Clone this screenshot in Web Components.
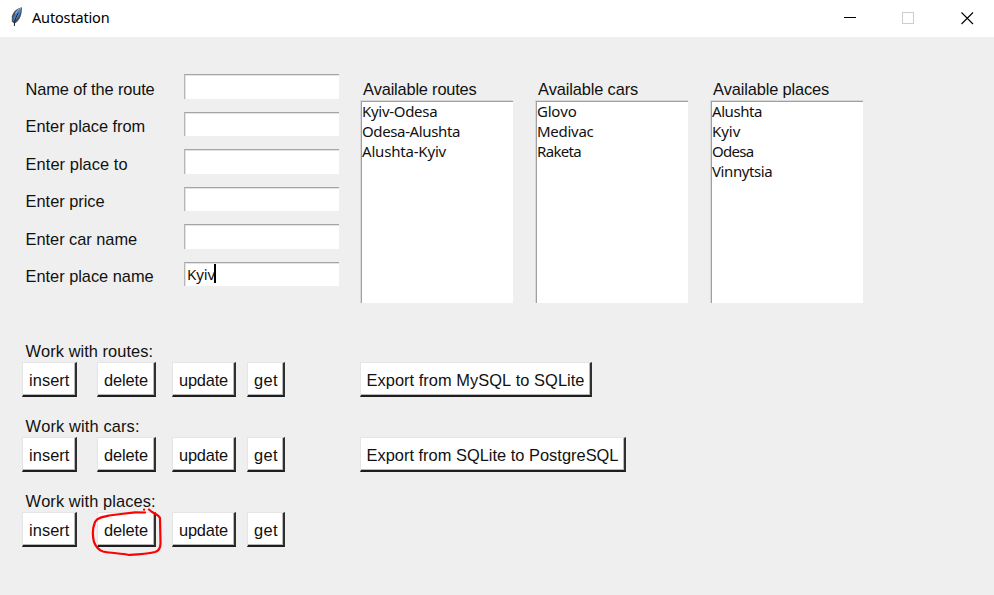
<!DOCTYPE html>
<html lang="en">
<head>
<meta charset="utf-8">
<title>Autostation</title>
<style>
html, body { margin: 0; height: 100%; overflow: hidden; }
</style>
</head>
<body>
<auto-window></auto-window>
<script>
const define = (name, html, setup) => {
  const template = document.createElement('template');
  template.innerHTML = html;
  customElements.define(name, class extends HTMLElement {
    connectedCallback() {
      if (this.shadowRoot) return;
      const root = this.attachShadow({ mode: 'open' });
      root.append(template.content.cloneNode(true));
      if (setup) setup.call(this, root);
    }
  });
};

// Single line of text whose tracking is adjusted to reach the width in "w".
define('fit-text', `
<style>
:host { display: block; white-space: nowrap; font-kerning: none; }
span { display: inline-block; }
</style><span></span>`, function (root) {
  const span = root.querySelector('span');
  const text = this.getAttribute('text');
  span.textContent = text;
  const target = Number(this.getAttribute('w'));
  const width = span.getBoundingClientRect().width;
  if (target && width) span.style.letterSpacing = ((target - width) / text.length) + 'px';
});

define('title-bar', `
<style>
:host { display: flex; height: 37px; background: #fff; align-items: center; font: 14.5px/20px "Noto Sans", "Open Sans", sans-serif; color: #000; }
.feather { width: 16px; height: 22px; margin-left: 9px; margin-right: 7px; margin-bottom: 3px; }
fit-text { flex: 1; margin-bottom: 3px; }
.controls { display: flex; height: 37px; }
.controls svg { width: 58.5px; height: 37px; }
</style>
<svg class="feather" viewBox="0 0 16 22">
  <path d="M13 1.2C8.5 2.1 4 5.4 2.9 10.2L2.8 15.2l1.9 2.1 2-.2C10 14.5 11.9 11 12.6 6.6z" fill="#4a515b"/>
  <path d="M12.1 2.2C8.8 4 5.9 7 4.6 11.4L4.4 15.5C8 13 10.7 9.5 11.6 5.8z" fill="#4c84ca"/>
  <path d="M11.8 2.1C9.5 3.3 7.6 5.2 6.5 7.5" fill="none" stroke="#a9c4e4" stroke-width="1"/>
  <path d="M9.4 7C7.4 10 6.2 12.7 5.5 16.5L5.4 20" fill="none" stroke="#17202d" stroke-width="1"/>
</svg>
<fit-text text="Autostation" w="77.5"></fit-text>
<div class="controls">
  <svg viewBox="0 0 58.5 37"><path d="M25 17.5h12" stroke="#000" shape-rendering="crispEdges"/></svg>
  <svg viewBox="0 0 58.5 37"><path d="M25 12.5h11v11h-11z" fill="none" stroke="#ccc" shape-rendering="crispEdges"/></svg>
  <svg viewBox="0 0 58.5 37"><path d="M25.5 12.5l11.5 11.5M37 12.5l-11.5 11.5" stroke="#000" stroke-width="1.1"/></svg>
</div>`);

define('form-row', `
<style>
:host { display: grid; grid-template-columns: 158px 155px; height: 37.5px; align-items: start; }
.label { padding-top: 4.7px; margin-left: -0.4px; }
.box { box-sizing: border-box; height: 24.5px; background: #fff; border-top: 1px solid #a5a5a5; border-left: 1px solid #b5b5b5; box-shadow: inset 1px 1px #e3e3e3; display: flex; align-items: center; padding: 0 0 1px 2px; font: 15px/20px "Noto Sans", "Open Sans", sans-serif; color: #111; }
.caret { width: 2px; height: 19px; background: #000; margin-left: -1px; }
</style>
<div class="label"></div><div class="box"></div>`, function (root) {
  root.querySelector('.label').innerHTML = `<fit-text text="${this.getAttribute('label')}" w="${this.getAttribute('w')}"></fit-text>`;
  const value = this.getAttribute('value');
  if (value) root.querySelector('.box').innerHTML = `<fit-text text="${value}" w="28"></fit-text><i class="caret"></i>`;
});

define('list-box', `
<style>
:host { display: block; width: 153px; }
.head { padding: 5px 0 0 3px; height: 21px; }
.list { box-sizing: border-box; height: 203px; background: #fff; border-top: 1px solid #d9d9d9; border-left: 1px solid #d9d9d9; box-shadow: inset 1px 1px #a0a0a0; padding: 0 0 0 1px; font: 15px/20px "Noto Sans", "Open Sans", sans-serif; color: #111; }
</style>
<div class="head"></div><div class="list"></div>`, function (root) {
  root.querySelector('.head').innerHTML = `<fit-text text="${this.getAttribute('heading')}" w="${this.getAttribute('w')}"></fit-text>`;
  root.querySelector('.list').innerHTML = this.getAttribute('items').split(',').map(item => {
    const [text, w] = item.split(':');
    return `<fit-text text="${text}" w="${w}"></fit-text>`;
  }).join('');
});

define('tk-button', `
<style>
:host { display: block; position: relative; }
button { all: unset; box-sizing: border-box; display: block; width: 100%; height: 35px; background: #fff; border: 1px solid #e5e5e5; border-right: 2px solid #303030; border-bottom: 2px solid #1e1e1e; box-shadow: inset -1px -1px #b8b8b8; padding: 2px 0 0 6px; line-height: 20px; }
</style>
<button></button><slot></slot>`, function (root) {
  this.style.width = this.getAttribute('size') + 'px';
  root.querySelector('button').innerHTML = `<fit-text text="${this.getAttribute('text')}" w="${this.getAttribute('w')}"></fit-text>`;
});

define('action-group', `
<style>
:host { display: block; height: 75px; }
.head { padding-left: 3.6px; height: 20.5px; box-sizing: border-box; line-height: 18px; }
.row { display: grid; grid-template-columns: 75px 75px 75px 112.5px auto; justify-content: start; }
</style>
<div class="head"></div>
<div class="row">
  <tk-button text="insert" w="40.5" size="55"></tk-button>
  <tk-button text="delete" w="44" size="59"><slot></slot></tk-button>
  <tk-button text="update" w="49" size="64"></tk-button>
  <tk-button text="get" w="24" size="38"></tk-button>
  <slot name="export"></slot>
</div>`, function (root) {
  root.querySelector('.head').innerHTML = `<fit-text text="${this.getAttribute('heading')}" w="${this.getAttribute('w')}"></fit-text>`;
});

define('pen-circle', `
<style>
:host { position: absolute; left: -7px; top: -5px; width: 74px; height: 52px; pointer-events: none; }
svg { display: block; overflow: visible; }
</style>
<svg width="74" height="52" viewBox="90 507 74 52" fill="none" stroke="#fe0000" stroke-width="2.2" stroke-linecap="round" stroke-linejoin="round">
  <path d="M145 512.5L135 512.3 121 514 109 515.5C102 517 97 518 95 522C92.5 528 92.5 536 94 542C96 547 98 550 103 551.5C112 553.5 121 553 129 555C137 554.5 146 554 155 552C159 551 160.5 548 160.5 543L160 518C159 515 155 513.5 152 512L149 509.5"/>
  <path d="M144 509.7h.1"/>
</svg>`);

define('auto-window', `
<style>
:host { display: flex; flex-direction: column; height: 595px; background: #efefef; font: 16.4px/20px "Liberation Sans", Arial, sans-serif; color: #111; }
main { display: flex; flex-direction: column; }
.top { display: flex; padding: 37px 0 0 26px; height: 267.5px; box-sizing: content-box; }
.form { width: 334px; }
.lists { display: flex; gap: 22px; }
.actions { padding-left: 22px; }
</style>
<title-bar></title-bar>
<main>
  <section class="top">
    <div class="form">
      <form-row label="Name of the route" w="129"></form-row>
      <form-row label="Enter place from" w="119.5"></form-row>
      <form-row label="Enter place to" w="102"></form-row>
      <form-row label="Enter price" w="79"></form-row>
      <form-row label="Enter car name" w="111.5"></form-row>
      <form-row label="Enter place name" w="128" value="Kyiv"></form-row>
    </div>
    <div class="lists">
      <list-box heading="Available routes" w="113.5" items="Kyiv-Odesa:75.3,Odesa-Alushta:98,Alushta-Kyiv:84"></list-box>
      <list-box heading="Available cars" w="100" items="Glovo:39.5,Medivac:56.5,Raketa:44"></list-box>
      <list-box heading="Available places" w="116" items="Alushta:50,Kyiv:28.3,Odesa:41.5,Vinnytsia:60.3"></list-box>
    </div>
  </section>
  <section class="actions">
    <action-group heading="Work with routes:" w="127.5"><tk-button slot="export" text="Export from MySQL to SQLite" w="218" size="232.5"></tk-button></action-group>
    <action-group heading="Work with cars:" w="114"><tk-button slot="export" text="Export from SQLite to PostgreSQL" w="252" size="266"></tk-button></action-group>
    <action-group heading="Work with places:" w="130"><pen-circle></pen-circle></action-group>
  </section>
</main>`);
</script>
</body>
</html>
